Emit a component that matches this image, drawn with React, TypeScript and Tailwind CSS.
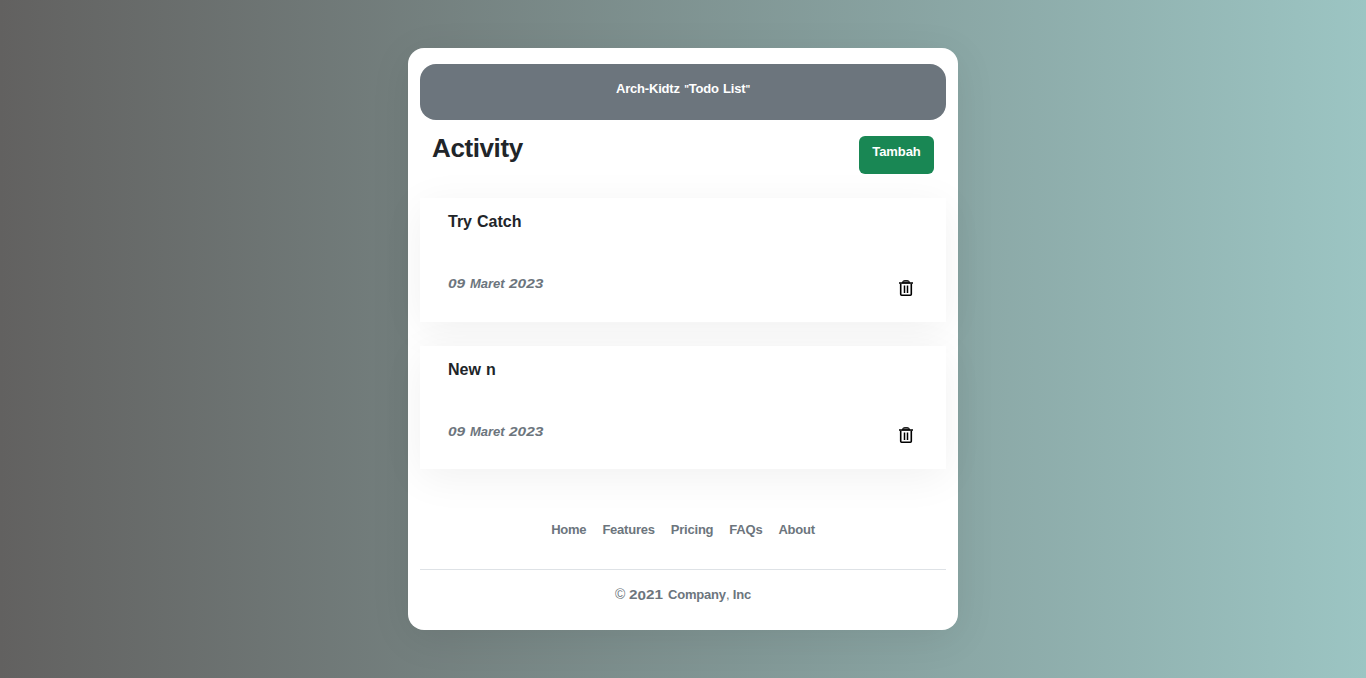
const todos = [
  { title: "Try Catch", day: "09", month: "Maret", year: "2023", card: "h-[124px]", icon: "mt-[5px]" },
  { title: "New n", day: "09", month: "Maret", year: "2023", card: "h-[123px]", icon: "mt-1" },
];

const links = ["Home", "Features", "Pricing", "FAQs", "About"];

function TrashIcon() {
  return (
    <svg width="14" height="16" viewBox="0 0 14 16" fill="none" aria-hidden="true">
      <path d="M3.5 3C3.8 1.3 5 .7 6 .7h2C9 .7 10.2 1.3 10.5 3Z" fill="#777" stroke="#222" strokeWidth="1.2" />
      <path d="M0 3h14" stroke="#000" strokeWidth="1.5" />
      <path d="M1.7 3.5V14.3q0 .9.9.9h8.8q.9 0 .9-.9V3.5" stroke="#000" strokeWidth="1.6" />
      <path d="M5.5 5.5v7.5M8.5 5.5v7.5" stroke="#000" strokeWidth="1.5" />
    </svg>
  );
}

export default function App() {
  return (
    <div className="h-[678px] bg-linear-to-r/srgb from-[#626160] to-[#9cc5c3] pt-12 font-['Liberation_Sans',Arial,sans-serif] text-[13px] leading-[17px] font-bold tracking-[-0.2px] text-[#212529]">
      <main className="mx-auto flex h-[582px] w-[550px] flex-col rounded-2xl bg-white px-3 pt-4 shadow-[0_8px_40px_rgba(0,0,0,0.08)]">
        <header className="h-14 rounded-2xl bg-[#6c757d] pt-4 text-center text-white [word-spacing:1px]">
          Arch-Kidtz <span className="text-[10px]">"</span>Todo List<span className="text-[10px]">"</span>
        </header>
        <div className="flex h-[78px] items-start justify-between px-3 pt-4">
          <h1 className="-mt-[3px] text-[26px] leading-[31px] tracking-[-0.4px]">Activity</h1>
          <button className="flex h-[38px] w-[75px] justify-center rounded-md bg-[#198754] pt-[7px] tracking-[-0.1px] text-white">Tambah</button>
        </div>
        <section className="flex flex-col gap-6">
          {todos.map((todo) => (
            <article key={todo.title} className={`${todo.card} flex flex-col bg-white px-7 pt-[13px] shadow-[0_8px_40px_rgba(0,0,0,0.06)]`}>
              <h2 className="text-base leading-[21px] tracking-normal [word-spacing:0.6px]">{todo.title}</h2>
              <div className="mt-[43px] flex justify-between pr-[5px]">
                <p className="flex text-[#6c757d] italic">
                  <span className="w-[22px] origin-left scale-x-[1.29] pt-px text-[12px] tracking-normal">{todo.day}</span>
                  <span className="w-[39px] tracking-normal">{todo.month}</span>
                  <span className="origin-left scale-x-[1.29] pt-px text-[12px] tracking-normal">{todo.year}</span>
                </p>
                <button aria-label="Delete" className={`${todo.icon} h-4`}><TrashIcon /></button>
              </div>
            </article>
          ))}
        </section>
        <footer className="mt-[52px] text-[#6c757d]">
          <nav className="flex h-[49px] justify-center gap-4 border-b border-[#dee2e6] tracking-[-0.22px]">
            {links.map((link) => <a key={link}>{link}</a>)}
          </nav>
          <p className="mt-4 flex justify-center tracking-[-0.2px]">
            <span className="w-[14px] text-[14px] font-normal">©</span>
            <span className="flex w-[39px] origin-left scale-x-[1.27] pt-px text-[12px] tracking-normal">
              <span>2</span><span className="pt-px">0</span><span>21</span>
            </span>
            <span>Company<span className="font-normal">,</span> Inc</span>
          </p>
        </footer>
      </main>
    </div>
  );
}
